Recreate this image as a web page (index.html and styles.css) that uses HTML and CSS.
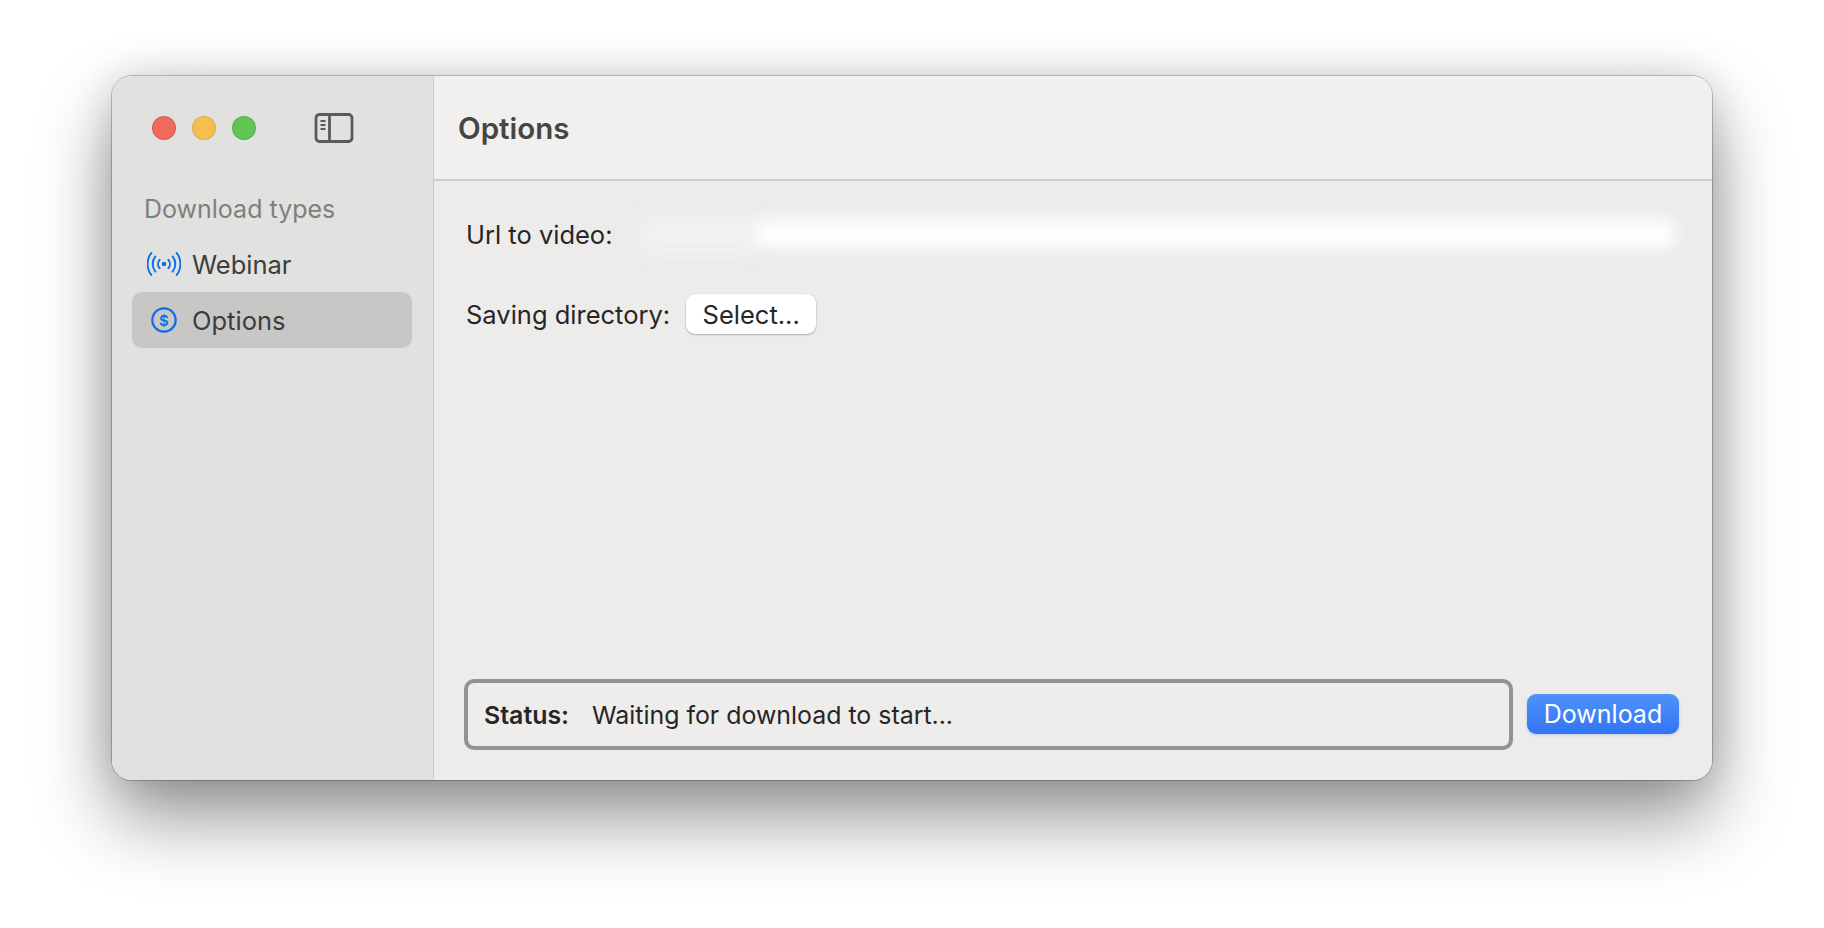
FILE: index.html
```html
<!DOCTYPE html>
<html lang="en">
<head>
    <meta charset="UTF-8">
    <title>Options</title>
    <link rel="stylesheet" href="styles.css">
</head>
<body>
    <div class="window">
        <aside class="sidebar">
            <div class="titlebar">
                <div class="lights">
                    <span class="light red"></span>
                    <span class="light yellow"></span>
                    <span class="light green"></span>
                </div>
                <svg class="toggle" width="40" height="32" viewBox="0 0 40 32" fill="none" stroke="#5a5a58" stroke-width="2.8">
                    <rect x="2" y="2.5" width="36" height="27" rx="3.5"/>
                    <path d="M15.5 2.5v27"/>
                    <path d="M6.5 9h5M6.5 13h5M6.5 17h5" stroke-width="2"/>
                </svg>
            </div>
            <div class="group-title">Download types</div>
            <div class="nav-item">
                <svg class="nav-icon" width="34" height="26" viewBox="0 0 34 26" fill="none" stroke="#0a6fe8" stroke-width="1.9" stroke-linecap="round">
                    <circle cx="17" cy="13" r="2.2" fill="#0a6fe8" stroke="none"/>
                    <path d="M12.6 8.8a6.5 6.5 0 0 0 0 8.4M21.4 8.8a6.5 6.5 0 0 1 0 8.4"/>
                    <path d="M8.4 5.4a12 12 0 0 0 0 15.2M25.6 5.4a12 12 0 0 1 0 15.2"/>
                    <path d="M4.3 2a18 18 0 0 0 0 22M29.7 2a18 18 0 0 1 0 22"/>
                </svg>
                <span>Webinar</span>
            </div>
            <div class="nav-item active">
                <svg class="nav-icon" width="34" height="28" viewBox="0 0 34 28" fill="none">
                    <circle cx="17" cy="14" r="11.7" stroke="#0a6fe8" stroke-width="2.2"/>
                    <text x="17" y="19.5" text-anchor="middle" class="dollar">$</text>
                </svg>
                <span>Options</span>
            </div>
        </aside>
        <main class="main">
            <header class="main-header">Options</header>
            <div class="content">
                <div class="row url-row">
                    <label>Url to video:</label>
                    <div class="url-field">
                        <span class="smudge"></span>
                        <span class="blur-bar"></span>
                    </div>
                </div>
                <div class="row dir-row">
                    <label>Saving directory:</label>
                    <button class="select-btn">Select...</button>
                </div>
                <div class="footer-row">
                    <div class="status-box">
                        <b>Status:</b>
                        <span>Waiting for download to start...</span>
                    </div>
                    <button class="download-btn">Download</button>
                </div>
            </div>
        </main>
    </div>
</body>
</html>
```

FILE: styles.css
```css
html, body {
    margin: 0;
    height: 100%;
    overflow: hidden;
}
body {
    background-color: #fff;
    font-family: Inter, 'Noto Sans', sans-serif;
    font-size: 25.5px;
    color: #262626;
    padding: 76px 112px 0;
    box-sizing: border-box;
}
.window {
    display: flex;
    width: 1600px;
    height: 704px;
    border-radius: 20px;
    overflow: hidden;
    box-sizing: border-box;
    box-shadow: 0 0 0 1px rgba(0, 0, 0, 0.22), 0 38px 75px rgba(0, 0, 0, 0.42), 0 0 40px rgba(0, 0, 0, 0.14);
}
.sidebar {
    width: 322px;
    flex-shrink: 0;
    box-sizing: border-box;
    background-color: #e1e1df;
    border-right: 1px solid #cfcecc;
    padding: 0 20px;
}
.titlebar {
    display: flex;
    align-items: center;
    height: 105px;
    padding: 0 0 2px 20px;
    box-sizing: border-box;
}
.lights {
    display: flex;
    gap: 16px;
}
.light {
    width: 24px;
    height: 24px;
    border-radius: 50%;
    box-sizing: border-box;
    border: 1px solid rgba(0, 0, 0, 0.1);
}
.red {
    background-color: #ee6a5f;
}
.yellow {
    background-color: #f5bf4f;
}
.green {
    background-color: #61c454;
}
.toggle {
    margin-left: 58px;
}
.group-title {
    color: #7f7f7d;
    font-size: 25px;
    padding-left: 12px;
    margin-top: 13px;
    height: 30px;
    line-height: 30px;
}
.nav-item {
    display: flex;
    align-items: center;
    height: 56px;
    width: 280px;
    border-radius: 10px;
    color: #3d3d3b;
    padding-left: 15px;
    gap: 11px;
    box-sizing: border-box;
}
.group-title + .nav-item {
    margin-top: 12px;
}
.active {
    background-color: #c8c7c5;
}
.dollar {
    font-size: 15px;
    font-weight: 600;
    fill: #0a6fe8;
}
.main {
    flex: 1;
    display: flex;
    flex-direction: column;
    background-color: #edecea;
    min-width: 0;
}
.main-header {
    height: 105px;
    box-sizing: border-box;
    border-bottom: 2px solid #cdccca;
    background-color: #f1f0ee;
    display: flex;
    align-items: center;
    padding-left: 24px;
    font-size: 29.5px;
    font-weight: 600;
    color: #454543;
}
.content {
    flex: 1;
    display: flex;
    flex-direction: column;
    padding: 0 29px;
}
.row {
    display: flex;
    align-items: center;
    padding-left: 3px;
}
.url-row {
    height: 72px;
    margin-top: 17px;
}
.url-field {
    flex: 1;
    position: relative;
    height: 72px;
    overflow: hidden;
}
.blur-bar {
    position: absolute;
    left: 125px;
    right: 9px;
    top: 22px;
    height: 27px;
    background-color: #fff;
    filter: blur(8px);
}
.smudge {
    position: absolute;
    left: 8px;
    width: 120px;
    top: 18px;
    height: 36px;
    background-color: #f1f1f0;
    filter: blur(9px);
}
.url-row label {
    margin-right: 18px;
}
.dir-row {
    height: 40px;
    margin-top: 24px;
}
.dir-row label {
    margin-right: 16px;
}
.select-btn {
    width: 130px;
    height: 40px;
    font: inherit;
    color: #262626;
    background-color: #fff;
    border: none;
    border-radius: 9px;
    box-shadow: 0 1px 2px rgba(0, 0, 0, 0.25), 0 0 0 0.5px rgba(0, 0, 0, 0.06);
}
.footer-row {
    margin-top: auto;
    display: flex;
    align-items: center;
    padding-bottom: 30px;
}
.status-box {
    width: 1049px;
    height: 71px;
    margin-left: 1px;
    box-sizing: border-box;
    border: 4px solid #939296;
    border-radius: 10px;
    display: flex;
    align-items: center;
    padding-left: 16px;
    gap: 23px;
    background-color: #eeedeb;
    font-size: 24.9px;
}
.status-box b {
    font-weight: 600;
}
.download-btn {
    width: 152px;
    height: 40px;
    margin-left: 14px;
    margin-top: -1px;
    font-family: inherit;
    font-size: 25px;
    color: #fff;
    border: none;
    border-radius: 9px;
    background: linear-gradient(#4f92fb, #3275f3);
    box-shadow: 0 1px 3px rgba(50, 100, 240, 0.25);
}
```
